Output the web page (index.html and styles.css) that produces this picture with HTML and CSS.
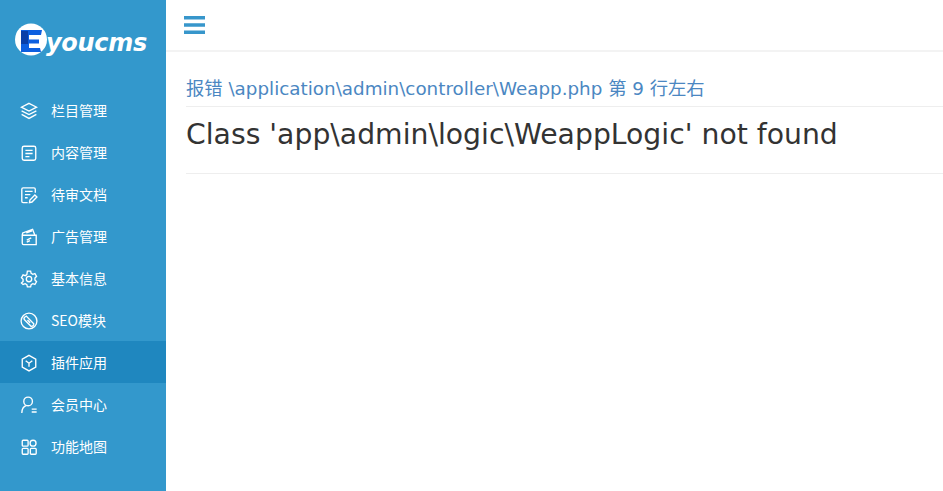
FILE: index.html
```html
<!DOCTYPE html>
<html lang="zh">
<head>
<meta charset="utf-8">
<title>Eyoucms</title>
<link rel="stylesheet" href="styles.css">
</head>
<body>
<div class="app">
  <aside class="sidebar">
    <div class="logo">
      <svg class="logo-mark" width="34" height="34" viewBox="0 0 34 34">
        <circle cx="16" cy="16.500" r="16" fill="#fff"/>
        <path d="M6 7h21l-1 5H14v4.500h10v4H14v4.500h11l1 4H6z" fill="#0d5fe0"/>
        <rect x="6" y="8" width="7" height="13" fill="#0a3fa8"/>
      </svg>
      <span class="logo-text">youcms</span>
    </div>
    <nav class="menu">
      <a class="item"><svg class="ico" viewBox="0 0 20 20"><path d="M10 1.500l8.500 4.300-8.500 4.300-8.500-4.300zM1.800 9.800l8.200 4.200 8.200-4.200M1.800 13.800l8.200 4.400 8.200-4.400"/></svg><span>栏目管理</span></a>
      <a class="item"><svg class="ico" viewBox="0 0 20 20"><rect x="2.500" y="2.500" width="15" height="15.500" rx="2"/><path d="M6 7h8M6 10.500h8M6 14h4.500"/></svg><span>内容管理</span></a>
      <a class="item"><svg class="ico" viewBox="0 0 20 20"><path d="M17 7.500V3.500A1.500 1.500 0 0 0 15.500 2H3.500A1.500 1.500 0 0 0 2 3.500v13.500A1.500 1.500 0 0 0 3.500 18.500H8.500"/><path d="M5.500 6h8.500M5.500 9.500h6M5.500 13h3M10.500 18.500l.5-3 5.500-5.500 2.300 2.300-5.500 5.500z"/></svg><span>待审文档</span></a>
      <a class="item"><svg class="ico" viewBox="0 0 20 20"><path d="M2.500 8h15.500v10.500H4A1.500 1.500 0 0 1 2.500 17zM2.500 8L3 5.500 14 1.500l2.500 6.500M7 5.500l6.500-2.300"/><path d="M7.500 13.500l5-2.500M7.500 15.800l3.500-1.800"/></svg><span>广告管理</span></a>
      <a class="item"><svg class="ico" viewBox="0 0 20 20"><circle cx="10" cy="10" r="3"/><path d="M8.200 1.200h3.600l.6 2.500 1.800 1.100 2.400-.9 1.800 3.100-1.800 1.800v2.400l1.800 1.800-1.800 3.100-2.400-.9-1.800 1.100-.6 2.500H8.200l-.6-2.500-1.800-1.100-2.400.9L1.600 14.500l1.800-1.800V10.300L1.600 8.500l1.800-3.100 2.400.9 1.800-1.100z"/></svg><span>基本信息</span></a>
      <a class="item"><svg class="ico" viewBox="0 0 20 20"><circle cx="10" cy="10" r="8.800"/><path d="M5.500 5.500l1.500-1 8.300 8.700a2.500 2.500 0 0 1-3 2.700L5 8.700A2.300 2.300 0 0 1 5.500 5.500zM8.300 9l3 3"/></svg><span>SEO模块</span></a>
      <a class="item active"><svg class="ico" viewBox="0 0 20 20"><path d="M10 1.500l7.500 4.300v8.700L10 18.800l-7.500-4.300V5.800z"/><path d="M6.300 7.500L10 10.300l3.700-2.800M10 10.300v4"/></svg><span>插件应用</span></a>
      <a class="item"><svg class="ico" viewBox="0 0 20 20"><circle cx="9" cy="6" r="4.800"/><path d="M2 19c0-4.500 2-7.500 5.500-8.500M13 14.500h5.500M13 17.800h5.500"/></svg><span>会员中心</span></a>
      <a class="item"><svg class="ico" viewBox="0 0 20 20"><rect x="2.500" y="2.500" width="6.500" height="6.500" rx="1"/><circle cx="14.500" cy="5.800" r="3.300"/><rect x="2.500" y="11.500" width="6.500" height="6.500" rx="1"/><rect x="11.500" y="11.500" width="6.500" height="6.500" rx="1"/></svg><span>功能地图</span></a>
    </nav>
  </aside>
  <main class="main">
    <header class="topbar">
      <svg class="burger" width="21" height="18" viewBox="0 0 21 18"><path d="M0 0h21v3.500H0zM0 7.300h21v3.500H0zM0 14.500h21V18H0z"/></svg>
    </header>
    <section class="content">
      <h2 class="where">报错 \application\admin\controller\Weapp.php 第 9 行左右</h2>
      <h1 class="message">Class 'app\admin\logic\WeappLogic' not found</h1>
    </section>
  </main>
</div>
</body>
</html>
```
FILE: styles.css
```css
* { box-sizing: border-box; }
html, body { margin: 0; height: 100%; overflow: hidden; }
body { background: #fff; font-family: "DejaVu Sans", "Noto Sans CJK SC", sans-serif; }
.app { display: flex; height: 491px; }
.sidebar { width: 166px; flex: none; background: #3398cc; color: #fff; padding-top: 23px; }
.logo { display: flex; align-items: flex-start; height: 66px; padding-left: 15px; }
.logo-mark { flex: none; }
.logo-text { font-family: "DejaVu Sans", sans-serif; font-size: 24px; font-style: italic; font-weight: 700; margin: 4px 0 0 -3px; letter-spacing: -.3px; line-height: 32px; }
.menu { display: flex; flex-direction: column; }
.item { display: flex; align-items: center; height: 42px; padding: 2px 0 0 20px; gap: 13px; font-family: "Noto Sans CJK SC", sans-serif; font-size: 14px; }
.item span { position: relative; top: -1px; }
.item.active { background: #1f87bf; }
.ico { width: 18px; height: 18px; flex: none; fill: none; stroke: #fff; stroke-width: 1.500; }
.main { flex: 1; min-width: 0; display: flex; flex-direction: column; }
.topbar { height: 52px; flex: none; display: flex; align-items: center; padding-left: 18px; padding-bottom: 1px; border-bottom: 2px solid #f3f3f3; }
.burger { fill: #3796cb; }
.content { padding: 23px 0 0 20px; }
.where { margin: 0; height: 32px; padding-top: 1px; font-size: 18.320px; font-weight: 400; line-height: 26px; color: #4b87c2; border-bottom: 1px solid #eee; white-space: nowrap; }
.message { margin: 0; height: 67px; padding-top: 9px; font-size: 28.270px; font-weight: 400; line-height: 38px; color: #333; border-bottom: 1px solid #eee; white-space: nowrap; }
```
